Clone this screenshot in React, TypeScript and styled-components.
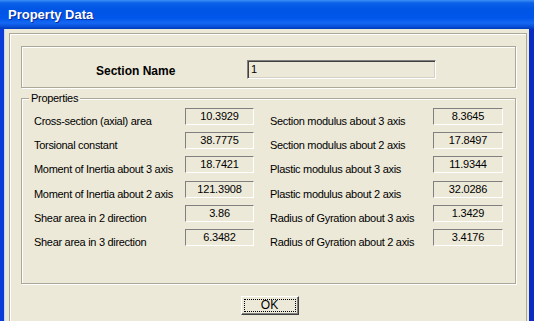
import React from "react";
import styled, { createGlobalStyle } from "styled-components";

type Prop = { label: string; value: string };

const leftProps: Prop[] = [
  { label: "Cross-section (axial) area", value: "10.3929" },
  { label: "Torsional constant", value: "38.7775" },
  { label: "Moment of Inertia about 3 axis", value: "18.7421" },
  { label: "Moment of Inertia about 2 axis", value: "121.3908" },
  { label: "Shear area in 2 direction", value: "3.86" },
  { label: "Shear area in 3 direction", value: "6.3482" },
];

const rightProps: Prop[] = [
  { label: "Section modulus about 3 axis", value: "8.3645" },
  { label: "Section modulus about 2 axis", value: "17.8497" },
  { label: "Plastic modulus about 3 axis", value: "11.9344" },
  { label: "Plastic modulus about 2 axis", value: "32.0286" },
  { label: "Radius of Gyration about 3 axis", value: "1.3429" },
  { label: "Radius of Gyration about 2 axis", value: "3.4176" },
];

export default function App() {
  return (
    <>
      <GlobalStyle />
      <Window>
        <TitleBar>
          <Title>Property Data</Title>
        </TitleBar>
        <Frame>
          <Panel>
            <SectionBox>
              <SectionLabel>Section Name</SectionLabel>
              <NameInput>1</NameInput>
            </SectionBox>

            <GroupBox>
              <Legend>Properties</Legend>
              <PropGrid>
                {leftProps.map((p, i) => (
                  <React.Fragment key={p.label}>
                    <Label>{p.label}</Label>
                    <ValueBox>{p.value}</ValueBox>
                    <Label $indent>{rightProps[i].label}</Label>
                    <ValueBox>{rightProps[i].value}</ValueBox>
                  </React.Fragment>
                ))}
              </PropGrid>
            </GroupBox>

            <ButtonRow>
              <OkButton>
                <Focus>OK</Focus>
              </OkButton>
            </ButtonRow>
          </Panel>
        </Frame>
      </Window>
    </>
  );
}

//#region components

const GlobalStyle = createGlobalStyle`
  html, body {
    margin: 0;
    padding: 0;
    background: #ece9d8;
    overflow: hidden;
  }
  body {
    font-family: "Liberation Sans", Arial, sans-serif;
  }
`;

const Window = styled.div`
  width: 534px;
  height: 321px;
  display: flex;
  flex-direction: column;
  overflow: hidden;
`;

const TitleBar = styled.div`
  flex: none;
  height: 29px;
  display: flex;
  align-items: center;
  padding-left: 8px;
  background: linear-gradient(
    180deg,
    #3d8ef6 0px,
    #0b61e8 3px,
    #0055e5 9px,
    #0056ea 18px,
    #1568f2 23px,
    #0a52dc 26px,
    #003cbc 29px
  );
`;

const Title = styled.span`
  color: #fff;
  font: bold 13px "Liberation Sans", Arial, sans-serif;
  text-shadow: 1px 1px 0 #0a2a9c;
  padding-bottom: 1px;
`;

const Frame = styled.div`
  flex: 1;
  display: flex;
  flex-direction: column;
  min-height: 0;
  background: #ece9d8;
  border-left: 4px solid #0a3dd8;
  border-right: 5px solid #0a2bc4;
  box-shadow: inset 1px 0 0 #c4d3f5;
  padding: 4px 2px 0 5px;
`;

const Panel = styled.div`
  flex: none;
  height: 320px;
  display: flex;
  flex-direction: column;
  border: 1px solid #aca899;
  box-shadow: inset 1px 1px 0 #fff;
  padding: 12px 10px 0 11px;
`;

const SectionBox = styled.div`
  box-sizing: border-box;
  height: 42px;
  display: flex;
  align-items: flex-start;
  padding: 13px 0 0 74px;
  border: 1px solid #aca899;
  box-shadow: inset 1px 1px 0 #fff, 1px 1px 0 #fff;
`;

const SectionLabel = styled.div`
  width: 151px;
  padding-top: 4px;
  font-size: 12px;
  font-weight: bold;
  line-height: 14px;
  color: #000;
`;

const NameInput = styled.div`
  box-sizing: border-box;
  width: 189px;
  height: 19px;
  padding: 2px 3px;
  font-size: 11px;
  line-height: 13px;
  color: #000;
  border-top: 1px solid #808080;
  border-left: 1px solid #808080;
  border-right: 1px solid #fff;
  border-bottom: 1px solid #fff;
  box-shadow: inset 1px 1px 0 #404040, inset -1px -1px 0 #d4d0c8;
`;

const GroupBox = styled.div`
  position: relative;
  margin-top: 10px;
  padding: 9px 12px 30px 12px;
  border: 1px solid #aca899;
  box-shadow: inset 1px 1px 0 #fff, 1px 1px 0 #fff;
`;

const Legend = styled.span`
  position: absolute;
  top: -7px;
  left: 7px;
  padding: 0 2px;
  background: #ece9d8;
  font-size: 11px;
  line-height: 13px;
  letter-spacing: -0.3px;
  color: #000;
`;

const PropGrid = styled.div`
  display: grid;
  grid-template-columns: 151px 69px 179px 70px;
  grid-auto-rows: 24.2px;
`;

const Label = styled.div<{ $indent?: boolean }>`
  padding-top: 6px;
  padding-left: ${(p) => (p.$indent ? "16px" : "0")};
  font-size: 11px;
  line-height: 14px;
  letter-spacing: -0.3px;
  white-space: nowrap;
  color: #000;
`;

const ValueBox = styled.div`
  box-sizing: border-box;
  height: 17px;
  font-size: 11px;
  line-height: 14px;
  letter-spacing: -0.2px;
  text-align: center;
  color: #000;
  border-top: 1px solid #808080;
  border-left: 1px solid #808080;
  border-right: 1px solid #fff;
  border-bottom: 1px solid #fff;
`;

const ButtonRow = styled.div`
  display: flex;
  justify-content: center;
  margin-top: 12px;
  padding-left: 2px;
`;

const OkButton = styled.div`
  box-sizing: border-box;
  width: 58px;
  height: 19px;
  padding: 2px;
  background: #ece9d8;
  border: 1px solid;
  border-color: #fff #404040 #404040 #fff;
  box-shadow: inset -1px -1px 0 #808080;
  font-size: 12px;
  color: #000;
`;

const Focus = styled.div`
  box-sizing: border-box;
  height: 100%;
  border: 1px dotted #000;
  text-align: center;
  line-height: 11px;
`;

//#endregion
